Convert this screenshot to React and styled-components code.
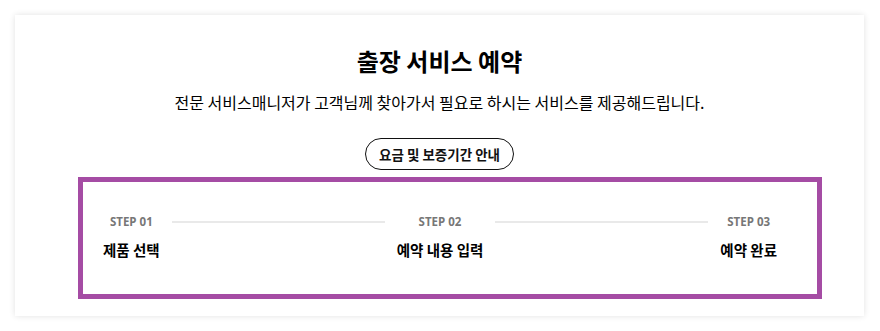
import React from "react";
import styled, { createGlobalStyle } from "styled-components";

const GlobalStyle = createGlobalStyle`
  html, body { margin: 0; padding: 0; background: #ffffff; }
  body { font-family: "Noto Sans CJK KR", "Noto Sans", sans-serif; color: #000; }
  * { box-sizing: border-box; }
`;

const Page = styled.div`
  padding: 15px 16px 15px 15px;
`;

const Card = styled.section`
  background: #fff;
  box-shadow: 0 0 6px rgba(0, 0, 0, 0.12);
  padding: 29px 0 17px;
  display: flex;
  flex-direction: column;
  align-items: center;
`;

const Title = styled.h2`
  margin: 0;
  font-size: 24px;
  font-weight: 700;
  line-height: 34px;
`;

const Subtitle = styled.p`
  margin: 12px 0 0;
  font-size: 16px;
  line-height: 24px;
  font-weight: 400;
`;

const PillButton = styled.button`
  margin-top: 24px;
  height: 32px;
  padding: 0 13px;
  border: 1.5px solid #111;
  border-radius: 16px;
  background: #fff;
  font-family: inherit;
  font-size: 13.5px;
  font-weight: 700;
  color: #111;
  cursor: pointer;
`;

const StepBox = styled.ol`
  list-style: none;
  align-self: flex-start;
  margin: 7px 0 0 63px;
  width: 744px;
  height: 122px;
  border: 5px solid #a54ca4;
  padding: 32px 40px 0 20px;
  display: grid;
  grid-template-columns: auto 1fr auto 1fr auto;
  align-items: start;
`;

const Step = styled.li`
  display: flex;
  flex-direction: column;
  align-items: center;
`;

const StepNo = styled.span`
  font-family: "Open Sans", "Noto Sans", sans-serif;
  font-size: 11.5px;
  font-weight: 700;
  color: #777;
  line-height: 16px;
`;

const StepLabel = styled.span`
  margin-top: 10px;
  font-size: 14.5px;
  font-weight: 700;
  line-height: 20px;
  color: #000;
`;

const Line = styled.li`
  height: 2px;
  background: #e9e9e9;
  margin: 7px 12px 0;
`;

const steps = [
  { no: "STEP 01", label: "제품 선택" },
  { no: "STEP 02", label: "예약 내용 입력" },
  { no: "STEP 03", label: "예약 완료" },
];

export default function App() {
  return (
    <>
      <GlobalStyle />
      <Page>
        <Card>
          <Title>출장 서비스 예약</Title>
          <Subtitle>
            전문 서비스매니저가 고객님께 찾아가서 필요로 하시는 서비스를 제공해드립니다.
          </Subtitle>
          <PillButton type="button">요금 및 보증기간 안내</PillButton>
          <StepBox>
            {steps.map((s, i) => (
              <React.Fragment key={s.no}>
                {i > 0 && <Line aria-hidden="true" />}
                <Step>
                  <StepNo>{s.no}</StepNo>
                  <StepLabel>{s.label}</StepLabel>
                </Step>
              </React.Fragment>
            ))}
          </StepBox>
        </Card>
      </Page>
    </>
  );
}
